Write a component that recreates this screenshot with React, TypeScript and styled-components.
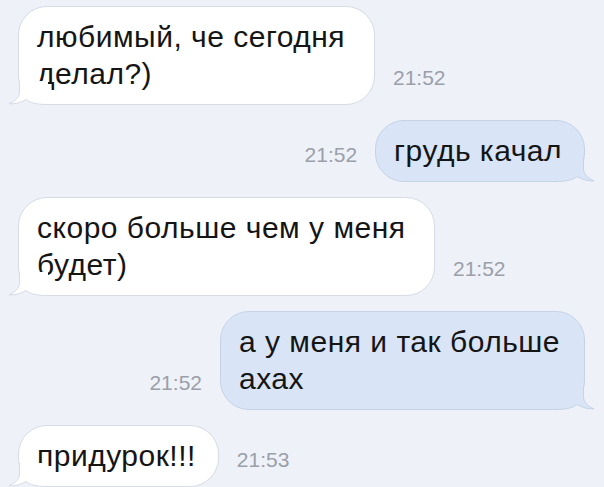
import React from "react";
import styled, { createGlobalStyle } from "styled-components";

const Global = createGlobalStyle`
  html, body { margin: 0; padding: 0; background: #eef1f8; }
  body { font-family: "Liberation Sans", Arial, sans-serif; }
`;

const Chat = styled.div`
  width: 604px;
  height: 487px;
  overflow: hidden;
  background: #eef1f8;
  display: flex;
  flex-direction: column;
  gap: 15px;
  padding: 6px 19px 0 18px;
  box-sizing: border-box;
`;

const Row = styled.div<{ $out?: boolean }>`
  display: flex;
  align-items: flex-end;
  justify-content: flex-start;
  flex-direction: ${(p) => (p.$out ? "row-reverse" : "row")};
  gap: 18px;
`;

const Bubble = styled.div<{ $out?: boolean; $w?: number }>`
  position: relative;
  box-sizing: border-box;
  ${(p) => (p.$w ? `width: ${p.$w}px;` : "")}
  padding: 11px 22px 12px 18px;
  border-radius: 29px;
  background: ${(p) => (p.$out ? "#d9e5f7" : "#ffffff")};
  border: 1px solid ${(p) => (p.$out ? "#c6d3e6" : "#d6dbe4")};
  color: #151515;
  font-size: 30px;
  line-height: 37px;
  letter-spacing: 0.5px;
`;

const Time = styled.div`
  font-size: 21px;
  line-height: 37px;
  color: #9a9fa9;
  padding-bottom: 9px;
  white-space: nowrap;
`;

const TailSvg = styled.svg<{ $out?: boolean }>`
  position: absolute;
  bottom: -1px;
  width: 40px;
  height: 24px;
  overflow: visible;
  ${(p) =>
    p.$out
      ? "right: -11px; transform: scaleX(-1);"
      : "left: -11px;"}
`;

function Tail({ out }: { out?: boolean }) {
  const fill = out ? "#d9e5f7" : "#ffffff";
  const stroke = out ? "#c6d3e6" : "#d6dbe4";
  return (
    <TailSvg $out={out} viewBox="0 0 40 24">
      <path
        d="M11.5 0 L11.5 11 C11.5 16 7 20.5 1 22.8 C7 23.3 13 21.5 18 18.5 C22 21.5 27 23.5 40 23.5 L40 0 Z"
        fill={fill}
      />
      <path
        d="M11.5 0 L11.5 11 C11.5 16 7 20.5 1 22.8 C7 23.3 13 21.5 18 18.5 C22 21.5 27 23.5 40 23.5"
        fill="none"
        stroke={stroke}
        strokeWidth="1"
      />
    </TailSvg>
  );
}

type Msg = { text: string; time: string; out?: boolean; w?: number };

const messages: Msg[] = [
  { text: "любимый, че сегодня делал?)", time: "21:52", w: 357 },
  { text: "грудь качал", time: "21:52", out: true },
  { text: "скоро больше чем у меня будет)", time: "21:52", w: 417 },
  { text: "а у меня и так больше ахах", time: "21:52", out: true, w: 365 },
  { text: "придурок!!!", time: "21:53" },
];

export default function App() {
  return (
    <>
      <Global />
      <Chat>
        {messages.map((m, i) => (
          <Row key={i} $out={m.out}>
            <Bubble $out={m.out} $w={m.w}>
              <Tail out={m.out} />
              {m.text}
            </Bubble>
            <Time>{m.time}</Time>
          </Row>
        ))}
      </Chat>
    </>
  );
}
